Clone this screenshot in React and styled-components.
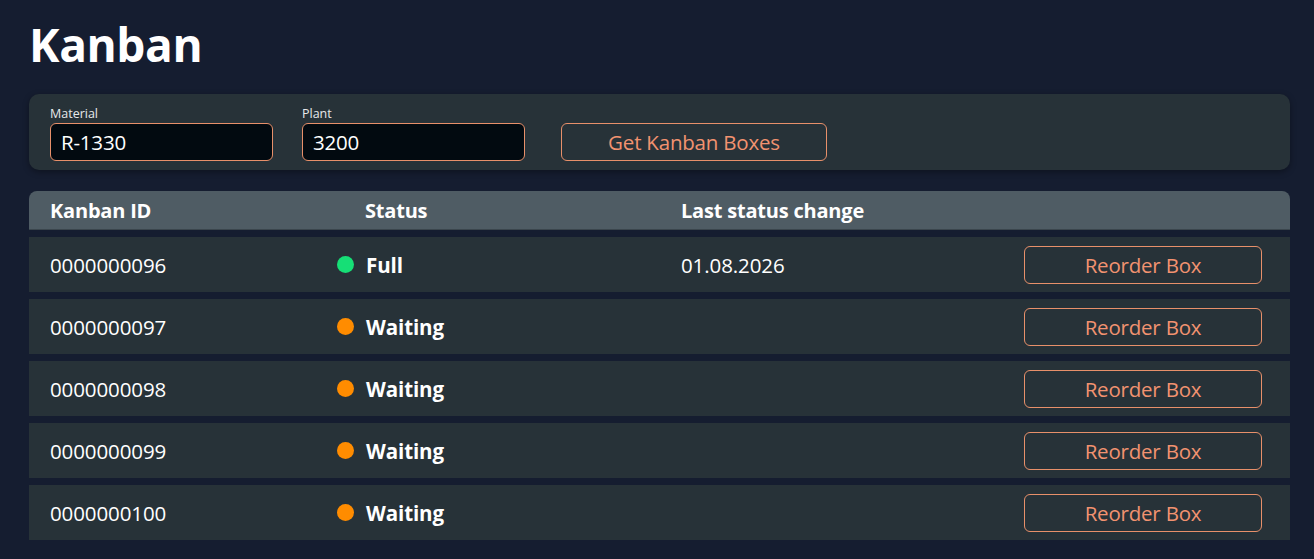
import React from 'react'
import styled, { createGlobalStyle } from 'styled-components'

const GlobalStyle = createGlobalStyle`
  body {
    margin: 0;
    background: #151d30;
    font-family: "Open Sans", "Noto Sans", sans-serif;
    color: #ffffff;
  }
`

const Page = styled.div`
  padding: 12px 24px 20px 29px;
`

const Title = styled.h1`
  margin: 0 0 18px 0;
  font-size: 46px;
  font-weight: 700;
  line-height: 64px;
  letter-spacing: -0.4px;
`

const FilterCard = styled.div`
  display: flex;
  align-items: flex-end;
  gap: 29px;
  background: #273238;
  border-radius: 10px;
  padding: 11px 21px 9px;
  box-shadow: 0 2px 6px rgba(0, 0, 0, 0.35);
`

const Field = styled.label`
  display: flex;
  flex-direction: column;
`

const FieldLabel = styled.span`
  font-size: 12.5px;
  line-height: 18px;
  color: #e6e8ea;
`

const Input = styled.input`
  box-sizing: border-box;
  width: 223px;
  height: 38px;
  padding: 0 10px;
  background: #020a10;
  border: 1px solid #e8906a;
  border-radius: 6px;
  color: #ffffff;
  font-family: inherit;
  font-size: 20.5px;
  letter-spacing: -0.2px;
  outline: none;
`

const OutlineButton = styled.button`
  box-sizing: border-box;
  width: ${p => p.width}px;
  height: 38px;
  margin-left: ${p => p.offset || 0}px;
  background: transparent;
  border: 1px solid #e8906a;
  border-radius: 6px;
  color: #f29270;
  font-family: inherit;
  font-size: 20.5px;
  letter-spacing: -0.2px;
  cursor: pointer;
`

const Table = styled.div`
  margin-top: 21px;
  display: flex;
  flex-direction: column;
  gap: 7px;
`

const HeaderRow = styled.div`
  display: grid;
  grid-template-columns: 287px 344px 1fr;
  align-items: center;
  height: 38px;
  padding: 0 21px;
  background: #4f5c64;
  border-radius: 8px 8px 0 0;
  border-bottom: 1px solid #3b464d;
  font-size: 20px;
  font-weight: 700;
  letter-spacing: -0.2px;
`

const HeaderCell = styled.div`
  padding-left: ${p => p.indent || 0}px;
`

const Row = styled.div`
  display: grid;
  grid-template-columns: 287px 344px 1fr auto;
  align-items: center;
  height: 55px;
  padding: 0 28px 0 21px;
  background: #273238;
  font-size: 20.5px;
  letter-spacing: -0.1px;
`

const Cell = styled.div`
  font-weight: 400;
`

const StatusCell = styled.div`
  display: flex;
  align-items: center;
  gap: 12px;
  font-weight: 700;
`

const Dot = styled.span`
  width: 17px;
  height: 17px;
  border-radius: 50%;
  background: ${p => (p.status === 'Full' ? '#16df76' : '#ff8c00')};
`

const boxes = [
  { id: '0000000096', status: 'Full', changed: '01.08.2026' },
  { id: '0000000097', status: 'Waiting', changed: '' },
  { id: '0000000098', status: 'Waiting', changed: '' },
  { id: '0000000099', status: 'Waiting', changed: '' },
  { id: '0000000100', status: 'Waiting', changed: '' },
]

export default function App() {
  return (
    <Page>
      <GlobalStyle />
      <Title>Kanban</Title>
      <FilterCard>
        <Field>
          <FieldLabel>Material</FieldLabel>
          <Input defaultValue="R-1330" />
        </Field>
        <Field>
          <FieldLabel>Plant</FieldLabel>
          <Input defaultValue="3200" />
        </Field>
        <OutlineButton width={266} offset={7}>Get Kanban Boxes</OutlineButton>
      </FilterCard>
      <Table>
        <HeaderRow>
          <HeaderCell>Kanban ID</HeaderCell>
          <HeaderCell indent={28}>Status</HeaderCell>
          <HeaderCell>Last status change</HeaderCell>
        </HeaderRow>
        {boxes.map(box => (
          <Row key={box.id}>
            <Cell>{box.id}</Cell>
            <StatusCell>
              <Dot status={box.status} />
              {box.status}
            </StatusCell>
            <Cell>{box.changed}</Cell>
            <OutlineButton width={238}>Reorder Box</OutlineButton>
          </Row>
        ))}
      </Table>
    </Page>
  )
}
